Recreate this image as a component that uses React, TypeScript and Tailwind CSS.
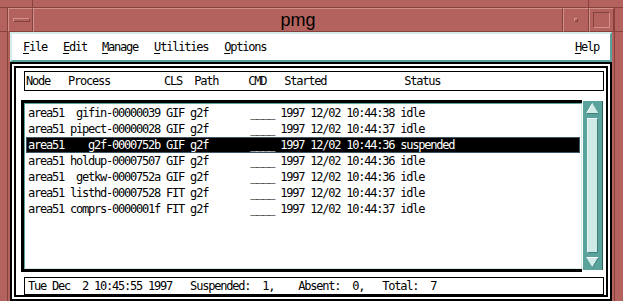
const mono = "font-['DejaVu_Sans_Mono',monospace] text-[12px] tracking-[-1.22px]";
const bevel =
  'border border-t-[#d2918c] border-l-[#d2918c] border-r-[#87413d] border-b-[#87413d]';

const rows = [
  'area51  gifin-00000039 GIF g2f       ____ 1997 12/02 10:44:38 idle',
  'area51 pipect-00000028 GIF g2f       ____ 1997 12/02 10:44:37 idle',
  'area51    g2f-0000752b GIF g2f       ____ 1997 12/02 10:44:36 suspended',
  'area51 holdup-00007507 GIF g2f       ____ 1997 12/02 10:44:36 idle',
  'area51  getkw-0000752a GIF g2f       ____ 1997 12/02 10:44:36 idle',
  'area51 listhd-00007528 FIT g2f       ____ 1997 12/02 10:44:37 idle',
  'area51 comprs-0000001f FIT g2f       ____ 1997 12/02 10:44:37 idle',
];

function Mnemonic({ first, rest }: { first: string; rest: string }) {
  return (
    <span>
      <span className="underline decoration-1 underline-offset-[2px]">{first}</span>
      {rest}
    </span>
  );
}

export default function App() {
  const selected = 2;
  return (
    <div className="flex h-[301px] w-[623px] flex-col overflow-hidden bg-[#b4625d]">
      {/* top edge of the window frame */}
      <div className="flex h-[8px] shrink-0 border-b border-[#87413d]">
        <div className="w-[33px] border-r border-[#87413d]" />
        <div className="flex-1" />
        <div className="w-[35px] border-l border-[#87413d]" />
      </div>

      <div className="flex flex-1">
        <div className="w-[8px] shrink-0 border-r border-[#87413d]">
          <div className="h-[24px] border-b border-[#87413d]" />
        </div>

        <div className="flex min-w-0 flex-1 flex-col">
          {/* title bar */}
          <div className="flex h-[24px] shrink-0">
            <div className={`flex w-[25px] items-center pl-[4px] ${bevel}`}>
              <div className={`h-[4px] w-[17px] ${bevel}`} />
            </div>
            <div
              className={`flex flex-1 items-center justify-center pb-[1px] font-['Liberation_Sans',sans-serif] text-[18px] leading-none text-black ${bevel}`}
            >
              pmg
            </div>
            <div className={`flex w-[26px] items-center justify-center ${bevel}`}>
              <div className={`h-[4px] w-[4px] ${bevel}`} />
            </div>
            <div className={`flex w-[25px] items-center justify-center ${bevel}`}>
              <div className="h-[16px] w-[17px] border border-t-[#87413d] border-l-[#87413d] border-r-[#d2918c] border-b-[#d2918c]" />
            </div>
          </div>

          {/* menu bar */}
          <div
            className={`mx-[2px] flex h-[30px] shrink-0 items-center border-2 border-t-[#d3ecea] border-l-[#d3ecea] border-r-[#5aa39d] border-b-[#5aa39d] bg-white text-black ${mono}`}
          >
            <span className="ml-[11px]">
              <Mnemonic first="F" rest="ile" />
            </span>
            <span className="ml-[16px]">
              <Mnemonic first="E" rest="dit" />
            </span>
            <span className="ml-[15px]">
              <Mnemonic first="M" rest="anage" />
            </span>
            <span className="ml-[16px]">
              <Mnemonic first="U" rest="tilities" />
            </span>
            <span className="ml-[16px]">
              <Mnemonic first="O" rest="ptions" />
            </span>
            <span className="ml-auto mr-[11px]">
              <Mnemonic first="H" rest="elp" />
            </span>
          </div>

          {/* work area */}
          <div className="mx-[2px] flex flex-1 flex-col border-2 border-black bg-white p-[2px]">
            <div className={`flex flex-1 flex-col border-2 border-black text-black ${mono}`}>
              <div className="ml-[8px] mr-[2px] mt-[3px] flex h-[20px] items-center whitespace-pre border border-black pl-[1px]">
                {'Node   Process         CLS  Path     CMD   Started             Status'}
              </div>

              <div className="ml-[5px] mr-[3px] mt-[9px] flex h-[172px]">
                <div className="flex-1 border-[3px] border-r-0 border-black">
                  <div className="h-full border border-t-[#5aa39d] border-l-[#5aa39d] border-r-[#d3ecea] border-b-[#d3ecea] pt-[1px]">
                    {rows.map((r, i) => (
                      <div
                        key={i}
                        className={
                          i === selected
                            ? 'mx-[1px] flex h-[16px] items-center whitespace-pre border border-[#3e5566] bg-black pl-[1px] text-white'
                            : 'mx-[1px] flex h-[16px] items-center whitespace-pre border border-transparent pl-[1px]'
                        }
                      >
                        {r}
                      </div>
                    ))}
                  </div>
                </div>

                {/* vertical scrollbar */}
                <div className="ml-[1px] mt-[1px] flex h-[169px] w-[20px] flex-col border-r border-[#2f5f5b] bg-[#5aa39d] px-[2px] py-[1px]">
                  <div className="flex h-[14px] items-start justify-center pt-[1px]">
                    <svg width="13" height="11" viewBox="0 0 13 11">
                      <polygon points="6.5,0.5 12.5,10.5 0.5,10.5" fill="#d3ecea" />
                      <polyline points="0.5,10.5 6.5,0.5" stroke="#ffffff" fill="none" />
                      <line x1="0.5" y1="10.5" x2="12.5" y2="10.5" stroke="#3d7f7a" />
                    </svg>
                  </div>
                  <div className="mx-[2px] my-[2px] flex-1 border border-t-[#eaf7f6] border-l-[#eaf7f6] border-r-[#3d7f7a] border-b-[#3d7f7a] bg-[#cfe9e7]" />
                  <div className="flex h-[14px] items-end justify-center pb-[1px]">
                    <svg width="13" height="11" viewBox="0 0 13 11">
                      <polygon points="0.5,0.5 12.5,0.5 6.5,10.5" fill="#d3ecea" />
                      <line x1="0.5" y1="0.5" x2="12.5" y2="0.5" stroke="#ffffff" />
                      <polyline points="12.5,0.5 6.5,10.5" stroke="#3d7f7a" fill="none" />
                    </svg>
                  </div>
                </div>
              </div>

              <div className="ml-[8px] mr-[2px] mt-[5px] flex h-[18px] items-center whitespace-pre border border-black pl-[3px]">
                {'Tue Dec  2 10:45:55 1997   Suspended:  1,    Absent:  0,   Total:  7'}
              </div>
            </div>
          </div>
        </div>

        <div className="w-[9px] shrink-0 border-l border-[#87413d]">
          <div className="h-[24px] border-b border-[#87413d]" />
        </div>
      </div>
    </div>
  );
}
